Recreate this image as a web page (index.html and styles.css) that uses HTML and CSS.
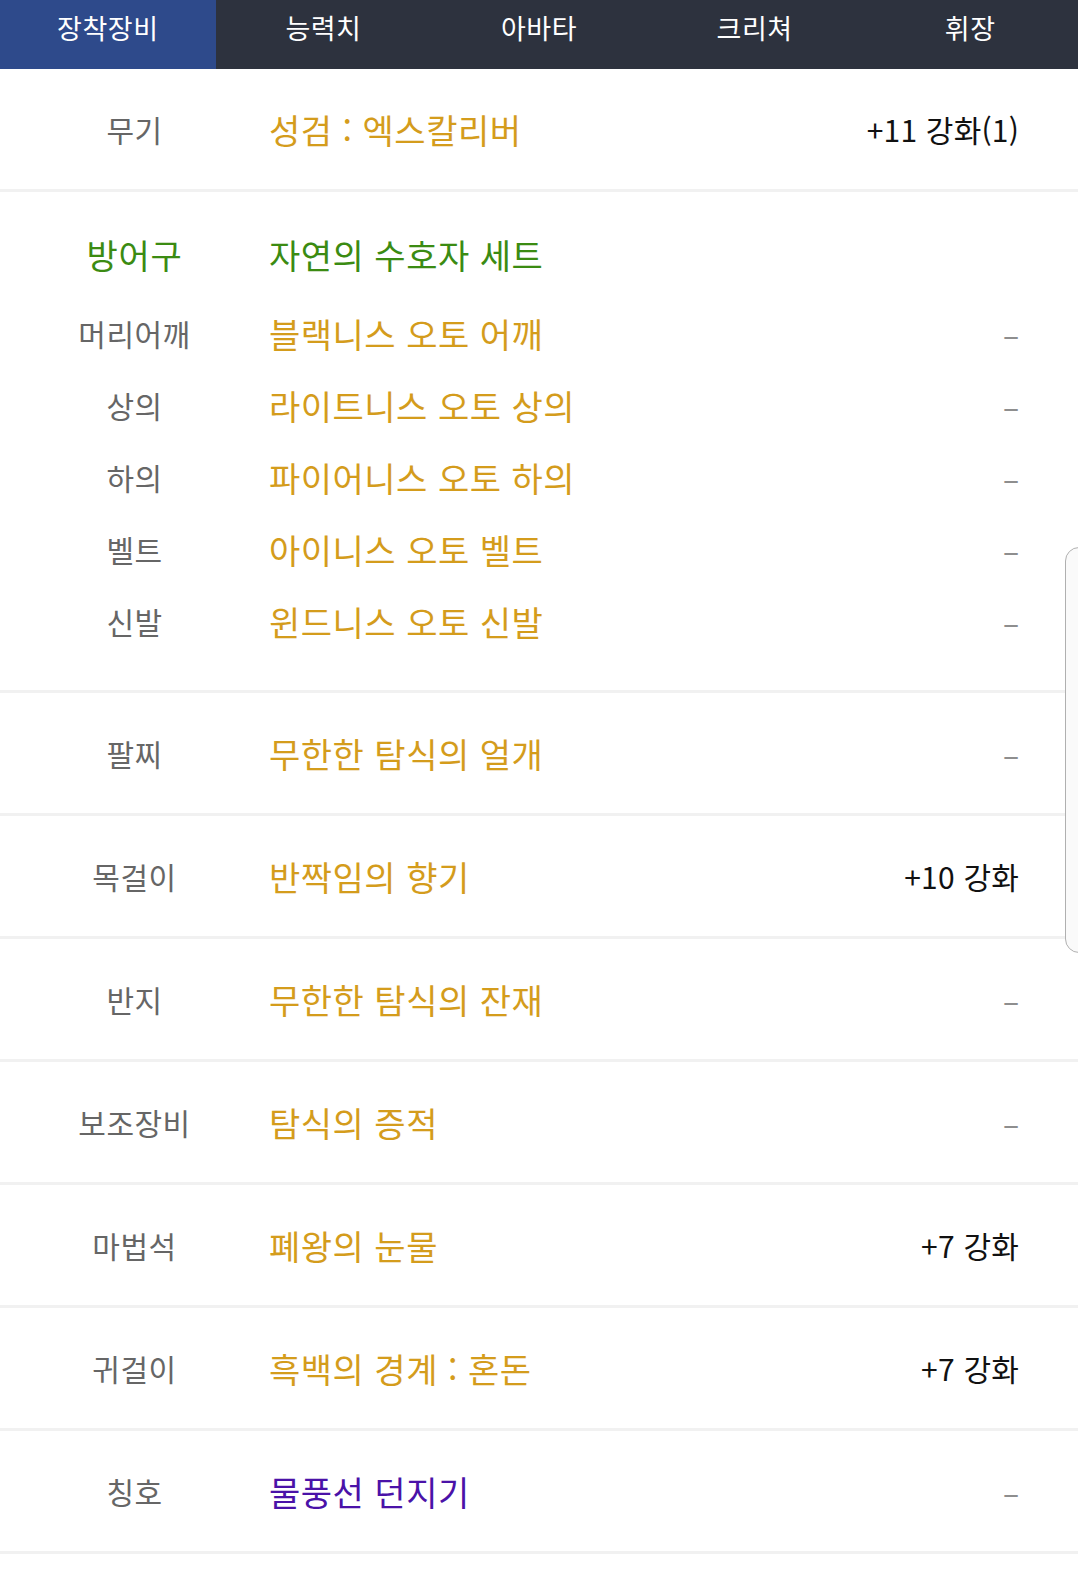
FILE: index.html
```html
<!DOCTYPE html>
<html lang="ko">
<head>
<meta charset="utf-8">
<title>장착장비</title>
<link rel="stylesheet" href="styles.css">
</head>
<body>
<nav class="tabs">
  <div class="tab active">장착장비</div>
  <div class="tab">능력치</div>
  <div class="tab">아바타</div>
  <div class="tab">크리쳐</div>
  <div class="tab">휘장</div>
</nav>
<main class="list">
  <div class="row">
    <div class="label">무기</div>
    <div class="name gold">성검 : 엑스칼리버</div>
    <div class="extra">+11 강화(1)</div>
  </div>
  <div class="armor">
    <div class="line head">
      <div class="label green big">방어구</div>
      <div class="name green">자연의 수호자 세트</div>
      <div class="extra"></div>
    </div>
    <div class="line">
      <div class="label">머리어깨</div>
      <div class="name gold">블랙니스 오토 어깨</div>
      <div class="extra dash">–</div>
    </div>
    <div class="line">
      <div class="label">상의</div>
      <div class="name gold">라이트니스 오토 상의</div>
      <div class="extra dash">–</div>
    </div>
    <div class="line">
      <div class="label">하의</div>
      <div class="name gold">파이어니스 오토 하의</div>
      <div class="extra dash">–</div>
    </div>
    <div class="line">
      <div class="label">벨트</div>
      <div class="name gold">아이니스 오토 벨트</div>
      <div class="extra dash">–</div>
    </div>
    <div class="line">
      <div class="label">신발</div>
      <div class="name gold">윈드니스 오토 신발</div>
      <div class="extra dash">–</div>
    </div>
  </div>
  <div class="row">
    <div class="label">팔찌</div>
    <div class="name gold">무한한 탐식의 얼개</div>
    <div class="extra dash">–</div>
  </div>
  <div class="row">
    <div class="label">목걸이</div>
    <div class="name gold">반짝임의 향기</div>
    <div class="extra">+10 강화</div>
  </div>
  <div class="row">
    <div class="label">반지</div>
    <div class="name gold">무한한 탐식의 잔재</div>
    <div class="extra dash">–</div>
  </div>
  <div class="row">
    <div class="label">보조장비</div>
    <div class="name gold">탐식의 증적</div>
    <div class="extra dash">–</div>
  </div>
  <div class="row">
    <div class="label">마법석</div>
    <div class="name gold">폐왕의 눈물</div>
    <div class="extra">+7 강화</div>
  </div>
  <div class="row">
    <div class="label">귀걸이</div>
    <div class="name gold">흑백의 경계 : 혼돈</div>
    <div class="extra">+7 강화</div>
  </div>
  <div class="row">
    <div class="label">칭호</div>
    <div class="name purple">물풍선 던지기</div>
    <div class="extra dash">–</div>
  </div>
</main>
<div class="scroll-handle"></div>
</body>
</html>
```
FILE: styles.css
```css
html, body {
  margin: 0;
  padding: 0;
  background: #ffffff;
}
body {
  font-family: "Noto Sans CJK KR", "Noto Sans", sans-serif;
  position: relative;
  min-height: 1570px;
}
.tabs {
  display: grid;
  grid-template-columns: repeat(5, 1fr);
  height: 69px;
  background: #2d323e;
}
.tab {
  color: #ffffff;
  font-size: 27px;
  letter-spacing: 0.5px;
  line-height: 40px;
  padding-top: 8px;
  text-align: center;
}
.tab.active {
  background: #2e4a8b;
}
.row,
.line {
  display: grid;
  grid-template-columns: 269px 1fr auto;
  align-items: center;
  padding-right: 59px;
}
.row {
  height: 120px;
  border-bottom: 3px solid #f1f1f1;
}
.armor {
  padding: 26px 0 33px 0;
  border-bottom: 3px solid #f1f1f1;
}
.line {
  height: 72px;
}
.line.head {
  margin-bottom: 7px;
}
.label {
  text-align: center;
  font-size: 30px;
  letter-spacing: 0.5px;
  color: #666666;
}
.label.big {
  font-size: 34px;
  letter-spacing: 0.8px;
}
.name {
  font-size: 34px;
  letter-spacing: 0.5px;
}
.extra {
  font-size: 30px;
  letter-spacing: 0.2px;
  color: #111111;
  text-align: right;
}
.dash {
  color: #8e8e8e;
  letter-spacing: 0;
}
.gold {
  color: #d49c1c;
}
.green {
  color: #3b8b12;
}
.purple {
  color: #4a12a8;
}
.scroll-handle {
  position: absolute;
  left: 1065px;
  top: 547px;
  width: 30px;
  height: 406px;
  border: 1.5px solid #b0b0b0;
  border-radius: 14px;
  background: #fafafa;
  box-sizing: border-box;
}
```
